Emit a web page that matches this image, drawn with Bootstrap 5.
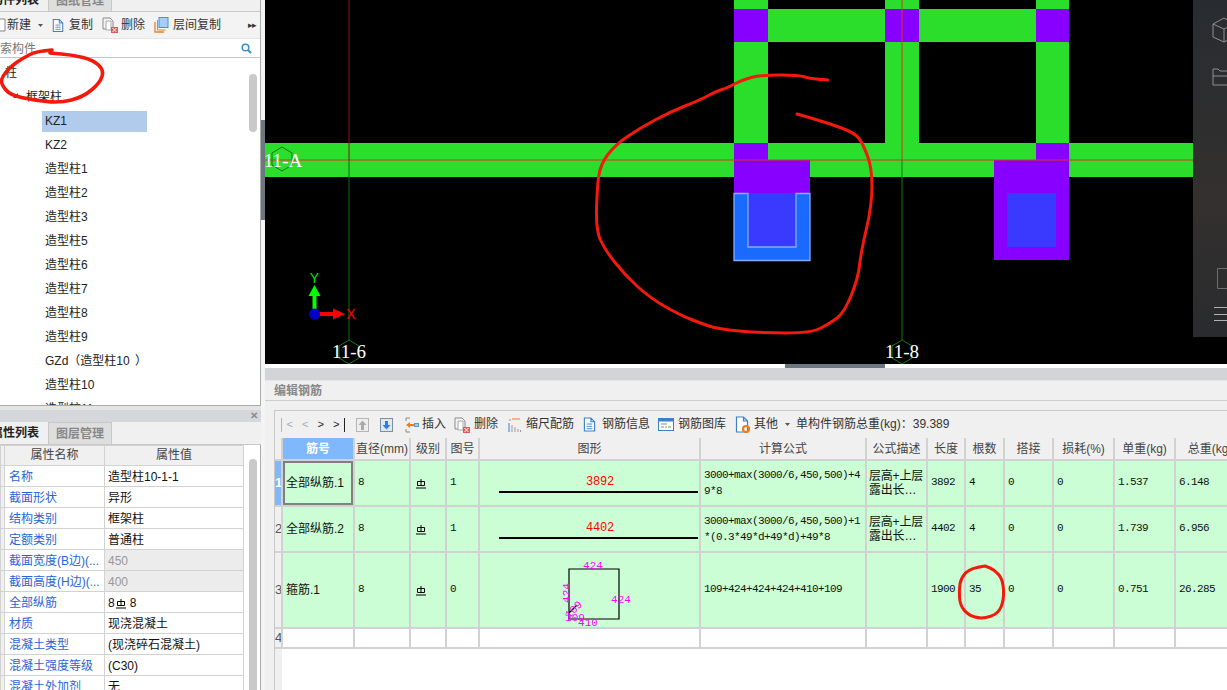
<!DOCTYPE html>
<html lang="zh">
<head>
  <meta charset="UTF-8" />
  <title>编辑钢筋</title>
  <link href="https://cdn.jsdelivr.net/npm/bootstrap@5.3.0/dist/css/bootstrap.min.css" rel="stylesheet" />
  <style>
    html, body { height: 690px; overflow: hidden; }
    body { font: 12px/1.2 "Liberation Sans", "Noto Sans CJK SC", sans-serif; color: #222; background: #fff; }
    .app-shell { width: 1227px; height: 690px; }

    /* spacing helpers for the toolbars */
    .gap-l1 { margin-left: 1px; }
    .gap-l3 { margin-left: 3px; }
    .gap-l4 { margin-left: 4px; }
    .gap-l5 { margin-left: 5px; }
    .gap-l6 { margin-left: 6px; }
    .gap-l7 { margin-left: 7px; }
    .gap-l8 { margin-left: 8px; }
    .gap-l9 { margin-left: 9px; }
    .gap-l10 { margin-left: 10px; }
    .gap-l11 { margin-left: 11px; }
    .gap-l12 { margin-left: 12px; }

    /* left column */
    .side-col { width: 261px; height: 690px; flex: none; background: #e4e4e4; overflow: hidden; }
    .side-top { height: 406px; background: #fff; border-right: 1px solid #aaa; border-bottom: 1px solid #aaa; flex: none; overflow: hidden; position: relative; }
    .tab-strip { background: #f0f0f0; border-bottom: 1px solid #c8c8c8; flex: none; overflow: hidden; }
    .tab-strip.first-strip { height: 12px; }
    .tab-strip.second-strip { height: 23px; }
    .side-tab { width: 64px; font-size: 12px; text-align: center; flex: none; font-weight: 700; color: #222; }
    .side-tab.off { background: #dedede; color: #888; border: 1px solid #c8c8c8; border-bottom: 0; margin-left: 1px; }
    .first-strip .side-tab { line-height: 12px; margin-top: -6px; height: 19px; }
    .first-strip .side-tab:first-child { margin-left: -17px; }
    .second-strip .side-tab { height: 23px; line-height: 22px; }
    .second-strip .side-tab:first-child { margin-left: -17px; }
    .side-tools { height: 27px; background: #f3f3f3; border-bottom: 1px solid #e4e4e4; font-size: 12px; color: #333; flex: none; }
    .side-tools svg { flex: none; }
    .more-mark { font-size: 9px; letter-spacing: -1px; }
    .search-row { height: 19px; line-height: 18px; border-bottom: 1px solid #c6c6c6; color: #777; flex: none; overflow: hidden; padding: 1px 8px 0 0; }
    .search-row span { margin-left: -12px; }
    .tree-row { height: 24px; line-height: 24px; font-size: 12px; color: #222; }
    .tree-wrap { padding-top: 3px; }
    .tree-pick { width: 105px; margin: 1.5px 0 1.5px 42px; height: 21px; line-height: 21px; padding-left: 3px; background: #b0cbec; }
    .lvl-0 { padding-left: 5px; }
    .lvl-1 { padding-left: 26px; }
    .lvl-3 { padding-left: 45px; }
    .paren-wide { letter-spacing: 2px; }
    .slim-thumb { position: absolute; right: 3px; width: 8px; background: #c9c9c9; border-radius: 4px; }
    .thumb-tree { top: 74px; height: 58px; }
    .thumb-prop { top: 14px; height: 240px; }
    .tree-arrow { position: absolute; left: 12px; top: 92px; }
    .close-bar { height: 12px; margin-top: 4px; background: #d6d7db; flex: none; text-align: right; padding-right: 3px; color: #8a8a8a; font-size: 10px; line-height: 12px; font-weight: 700; }
    .prop-zone { flex: 1; background: #fff; border-right: 1px solid #aaa; position: relative; overflow: hidden; }
    .prop-grid { width: 243px; table-layout: fixed; border-collapse: collapse; }
    .prop-grid col:nth-child(1) { width: 4px; }
    .prop-grid col:nth-child(2) { width: 100px; }
    .prop-grid col:nth-child(3) { width: 139px; }
    .prop-grid th, .prop-grid td { border: 1px solid #d2d2d2; height: 21px; padding: 2px 3px 0; font-size: 12px; font-weight: 400; overflow: hidden; white-space: nowrap; color: #111; }
    .prop-grid th { background: #f0f0f0; text-align: center; color: #444; height: 20px; padding-top: 0; }
    .prop-grid td.nm { color: #2b63d8; padding-left: 4px; }
    .prop-grid td.gutter, .prop-grid th.gutter { background: #f0f0f0; padding: 0; }
    .prop-grid td.dim { background: #ececec; color: #999; }

    /* splitter */
    .split-gap { width: 4px; flex: none; background: #f4f4f4; padding-top: 120px; }
    .split-handle { height: 100px; background: #6b7680; }

    /* canvas */
    .main-col { width: 962px; flex: none; }
    .cad-view { display: block; width: 962px; height: 364px; background: #000; flex: none; }
    .cad-label { font: 19px "Liberation Serif", serif; fill: #fff; text-anchor: middle; }
    .axis-mark { font: 14px "Liberation Sans", sans-serif; text-anchor: middle; }
    .hsplit { height: 4px; background: #fff; flex: none; }
    .hsplit div { margin-left: 520px; width: 100px; height: 4px; background: #6b7680; }
    .gray-band { height: 12px; background: #d3d4d8; flex: none; }
    .panel-head { height: 21px; line-height: 21px; padding-left: 9px; background: #f0f0f0; color: #888; font-weight: 700; border-top: 1px solid #e6e6e6; border-bottom: 1px solid #cfcfcf; flex: none; }
    .edit-zone { flex: 1; background: #f0f0f0; padding: 9px 0 0 9px; overflow: hidden; }
    .grid-box { height: 100%; border-top: 1px solid #c8c8c8; border-left: 1px solid #c8c8c8; overflow: hidden; background: #fff; }
    .grid-tools { height: 27px; background: #f0f0f0; color: #333; font-size: 12px; white-space: nowrap; }
    .grid-tools svg { flex: none; }
    .grid-tools .arrow-txt { width: 15.5px; text-align: center; font: 11px "Liberation Mono", monospace; color: #222; }
    .grid-tools .arrow-txt.off { color: #aaa; }

    .rebar-grid { width: 970px; table-layout: fixed; margin: 0; --bs-table-border-color: #d2d2d2; }
    .rebar-grid col:nth-child(1) { width: 7px; }
    .rebar-grid col:nth-child(2) { width: 72px; }
    .rebar-grid col:nth-child(3) { width: 56px; }
    .rebar-grid col:nth-child(4) { width: 36px; }
    .rebar-grid col:nth-child(5) { width: 33px; }
    .rebar-grid col:nth-child(6) { width: 221px; }
    .rebar-grid col:nth-child(7) { width: 166px; }
    .rebar-grid col:nth-child(8) { width: 61px; }
    .rebar-grid col:nth-child(9) { width: 38px; }
    .rebar-grid col:nth-child(10) { width: 39px; }
    .rebar-grid col:nth-child(11) { width: 49px; }
    .rebar-grid col:nth-child(12) { width: 61px; }
    .rebar-grid col:nth-child(13) { width: 61px; }
    .rebar-grid col:nth-child(14) { width: 70px; }
    .rebar-grid > :not(caption) > * > * { padding: 0 3px; border-width: 0 2px 2px 0; border-style: solid; vertical-align: middle; font-size: 12px; line-height: 14px; color: #111; overflow: hidden; }
    .rebar-grid thead th { height: 22px; --bs-table-bg: #f0f0f0; font-weight: 400; text-align: center; color: #444; white-space: nowrap; padding: 0; }
    .rebar-grid thead th.on { --bs-table-bg: #7fb8fb; color: #fff; font-weight: 700; }
    .rebar-grid .filled > * { --bs-table-bg: #cbfed5; }
    .rebar-grid .num-cell { --bs-table-bg: #f0f0f0; padding: 0; text-align: right; color: #555; font-size: 13px; }
    .rebar-grid .num-cell.on { --bs-table-bg: #7fb8fb; color: #fff; font-weight: 700; }
    .rebar-grid .focus-cell { box-shadow: inset 0 0 0 2px #808080; }
    .rebar-grid .mono { font: 11px/14px "Liberation Mono", monospace; letter-spacing: -.6px; white-space: nowrap; padding: 0 3px 2px; }
    .rebar-grid .formula-cell { line-height: 16px; padding-bottom: 1px; }
    .rebar-grid .desc-cell { padding: 0 0 0 2px; white-space: nowrap; letter-spacing: -.2px; }
    .rebar-grid .grade-cell { padding-left: 5px; }
    .row-a { height: 46px; }
    .row-c { height: 76px; }
    .row-d { height: 20px; }
    .bar-num { font: 12px/14px "Liberation Mono", monospace; color: #f00; text-align: center; margin: 2px 0 0 21px; letter-spacing: -.2px; }
    .bar-line { height: 2px; background: #000; margin: 2px 0 0 16px; width: 199px; }
    .grid-foot { width: 7px; height: 60px; background: #f0f0f0; }
    .ink-layer { position: absolute; left: 0; top: 0; pointer-events: none; }
    .ink-layer path { fill: none; stroke: #f5180c; stroke-width: 3; stroke-linejoin: round; stroke-linecap: round; }
    .ink-layer path.ink-thick { stroke-width: 3.6; }
  </style>
</head>
<body class="position-relative">
  <svg width="0" height="0" class="position-absolute">
    <symbol id="ic-doc" viewBox="0 0 14 16">
      <path d="M1.500 1h7l4 4v10h-11z M8.500 1v4h4" fill="#fff" stroke="#3f7fc4" stroke-width="1.200" />
      <path d="M4 7.500h6M4 10h6M4 12.500h6" stroke="#3f7fc4" />
    </symbol>
    <symbol id="ic-del" viewBox="0 0 16 16">
      <path d="M1 1h7l3 3v8H1z" fill="#f4f4f4" stroke="#8a8a8a" />
      <path d="M4 4h5v9H4z" fill="#fff" stroke="#a8a8a8" />
      <rect x="9" y="10" width="7" height="6" fill="#dd5a5a" />
      <path d="M10.500 11l4 4M14.500 11l-4 4" stroke="#fff" />
    </symbol>
    <symbol id="ic-other" viewBox="0 0 16 18">
      <path d="M1.500 1h7l4 4v11h-11z M8.500 1v4h4" fill="#fff" stroke="#3f7fc4" stroke-width="1.200" />
      <circle cx="11" cy="13" r="3" fill="none" stroke="#f07a1e" stroke-width="2.200" />
    </symbol>
    <symbol id="ic-grade" viewBox="0 0 10 11">
      <path d="M1.500 3.500h7v4h-7zM5 1v7M0 10h10" fill="none" stroke="#000" />
    </symbol>
  </svg>

  <div class="app-shell d-flex">
    <div class="side-col d-flex flex-column">
      <div class="side-top d-flex flex-column">
        <div class="tab-strip first-strip d-flex">
          <div class="side-tab">构件列表</div>
          <div class="side-tab off">图纸管理</div>
        </div>
        <div class="side-tools d-flex align-items-center">
          <svg width="6" height="14" viewBox="0 0 6 14"><path d="M0 1h5v12H0" fill="#fff" stroke="#888" /></svg>
          <span class="gap-l1">新建</span>
          <svg class="gap-l7" width="5" height="3" viewBox="0 0 5 3"><path d="M0 0h5L2.500 3z" fill="#555" /></svg>
          <svg class="gap-l9" width="12" height="15"><use href="#ic-doc" /></svg>
          <span class="gap-l5">复制</span>
          <svg class="gap-l9" width="16" height="16"><use href="#ic-del" /></svg>
          <span class="gap-l3">删除</span>
          <svg class="gap-l9" width="15" height="16" viewBox="0 0 15 16"><path d="M1 5v10h9" fill="none" stroke="#e8832a" stroke-width="1.300" /><path d="M3.500 3v10h8" fill="none" stroke="#e8832a" /><rect x="5" y=".5" width="9" height="10" fill="#a9cdf3" stroke="#4d8fd6" /></svg>
          <span class="gap-l4">层间复制</span>
          <span class="ms-auto me-1 more-mark">▸▸</span>
        </div>
        <div class="search-row d-flex align-items-center justify-content-between">
          <span>搜索构件...</span>
          <svg width="11" height="11" viewBox="0 0 11 11"><circle cx="4.500" cy="4.500" r="3.300" fill="none" stroke="#3a8fc8" stroke-width="1.500" /><path d="M7 7l3 3" stroke="#3a8fc8" stroke-width="2" /></svg>
        </div>
        <div class="tree-wrap">
          <div class="tree-row lvl-0">柱</div>
          <div class="tree-row lvl-1">框架柱</div>
          <div class="tree-pick">KZ1</div>
          <div class="tree-row lvl-3">KZ2</div>
          <div class="tree-row lvl-3">造型柱1</div>
          <div class="tree-row lvl-3">造型柱2</div>
          <div class="tree-row lvl-3">造型柱3</div>
          <div class="tree-row lvl-3">造型柱5</div>
          <div class="tree-row lvl-3">造型柱6</div>
          <div class="tree-row lvl-3">造型柱7</div>
          <div class="tree-row lvl-3">造型柱8</div>
          <div class="tree-row lvl-3">造型柱9</div>
          <div class="tree-row lvl-3">GZd（造型柱10<span class="paren-wide"> </span>）</div>
          <div class="tree-row lvl-3">造型柱10</div>
          <div class="tree-row lvl-3">造型柱11</div>
        </div>
        <div class="slim-thumb thumb-tree"></div>
        <svg class="tree-arrow" width="7" height="7" viewBox="0 0 7 7"><path d="M6 1v5H1z" fill="#444" /></svg>
      </div>
      <div class="close-bar">✕</div>
      <div class="tab-strip second-strip d-flex">
        <div class="side-tab">属性列表</div>
        <div class="side-tab off">图层管理</div>
      </div>
      <div class="prop-zone">
        <table class="prop-grid">
          <colgroup><col /><col /><col /></colgroup>
          <tr><th class="gutter"></th><th>属性名称</th><th>属性值</th></tr>
          <tr><td class="gutter"></td><td class="nm">名称</td><td>造型柱10-1-1</td></tr>
          <tr><td class="gutter"></td><td class="nm">截面形状</td><td>异形</td></tr>
          <tr><td class="gutter"></td><td class="nm">结构类别</td><td>框架柱</td></tr>
          <tr><td class="gutter"></td><td class="nm">定额类别</td><td>普通柱</td></tr>
          <tr><td class="gutter"></td><td class="nm">截面宽度(B边)(...</td><td class="dim">450</td></tr>
          <tr><td class="gutter"></td><td class="nm">截面高度(H边)(...</td><td class="dim">400</td></tr>
          <tr><td class="gutter"></td><td class="nm">全部纵筋</td><td>8<svg class="gap-l1 me-1" width="10" height="11"><use href="#ic-grade" /></svg>8</td></tr>
          <tr><td class="gutter"></td><td class="nm">材质</td><td>现浇混凝土</td></tr>
          <tr><td class="gutter"></td><td class="nm">混凝土类型</td><td>(现浇碎石混凝土)</td></tr>
          <tr><td class="gutter"></td><td class="nm">混凝土强度等级</td><td>(C30)</td></tr>
          <tr><td class="gutter"></td><td class="nm">混凝土外加剂</td><td>无</td></tr>
        </table>
        <div class="slim-thumb thumb-prop"></div>
      </div>
    </div>

    <div class="split-gap"><div class="split-handle"></div></div>

    <div class="main-col d-flex flex-column">
      <svg class="cad-view" viewBox="265 0 962 364" xmlns="http://www.w3.org/2000/svg">
        <g fill="#2bde2c">
          <rect x="734" y="0" width="34" height="143" />
          <rect x="885" y="0" width="34" height="143" />
          <rect x="1036" y="0" width="33" height="143" />
          <rect x="734" y="9" width="335" height="33" />
          <rect x="265" y="143" width="928" height="34" />
        </g>
        <g fill="#8800ff">
          <rect x="734" y="9" width="34" height="33" />
          <rect x="885" y="9" width="34" height="33" />
          <rect x="1036" y="9" width="33" height="33" />
          <rect x="734" y="143" width="34" height="17" />
          <rect x="1036" y="143" width="33" height="17" />
          <rect x="734" y="160" width="76" height="34" />
          <rect x="994" y="160" width="75" height="100" />
        </g>
        <rect x="1007" y="193" width="49" height="54" fill="#3a3aff" />
        <rect x="748" y="193" width="48" height="54" fill="#3a3aff" />
        <path d="M734 193.500h14v53.500h48v-53.500h14v67h-76z" fill="#1a6aff" stroke="#86adff" stroke-width="1.300" />
        <path d="M265 160H1193" stroke="#e0331c" stroke-width="1" />
        <path d="M349 0V160" stroke="#8c1010" />
        <path d="M349 160V340" stroke="#0f6a10" />
        <path d="M902 0V160" stroke="#e0331c" />
        <path d="M902 160V340" stroke="#0f7a10" />
        <path d="M282 147l10 6v12l-10 6-10-6v-12z" fill="none" stroke="#137a13" />
        <path d="M349 340l10 6v12l-10 6-10-6v-12z M902 340l10 6v12l-10 6-10-6v-12z" fill="none" stroke="#137a13" />
        <text class="cad-label" x="283" y="167">11-A</text>
        <text class="cad-label" x="349" y="358">11-6</text>
        <text class="cad-label" x="902" y="358">11-8</text>
        <path d="M314.500 310V295" stroke="#00ff00" stroke-width="4" />
        <path d="M314.500 285l6 11h-12z" fill="#00ff00" />
        <path d="M319 314H334" stroke="#ff0000" stroke-width="4" />
        <path d="M345 314l-12-5.500v11z" fill="#ff0000" />
        <circle cx="314.500" cy="314" r="5.500" fill="#0000c8" />
        <text class="axis-mark" x="314.500" y="283" fill="#00e000">Y</text>
        <text class="axis-mark" x="351" y="319" fill="#ff0000">X</text>
        <defs><linearGradient id="dock-fill" x1="0" y1="0" x2="0" y2="1"><stop offset="0" stop-color="#282c31" /><stop offset=".6" stop-color="#33302e" /><stop offset="1" stop-color="#2a2b2e" /></linearGradient></defs>
        <rect x="1193" y="0" width="34" height="337" fill="url(#dock-fill)" />
        <g fill="none" stroke="#8e8e8e" stroke-width="1">
          <path d="M1213 24l11-6 10 6v13l-10 5-11-5zM1213 24l11 5 10-5M1224 29v13" />
          <path d="M1213 85V69h5l2 2h12M1213 76h19M1213 85h19" />
        </g>
        <path d="M1217.500 268.500h14v20h-14z" fill="none" stroke="#6e6e6e" />
        <path d="M1214 307.500h13M1214 314.500h13M1214 320.500h13" stroke="#b0b0b0" />
      </svg>
      <div class="hsplit"><div></div></div>
      <div class="gray-band"></div>
      <div class="panel-head">编辑钢筋</div>
      <div class="edit-zone">
        <div class="grid-box">
          <div class="grid-tools d-flex align-items-center">
            <svg class="gap-l6" width="1" height="14"><rect width="1" height="14" fill="#c9a9b8" /></svg>
            <span class="arrow-txt off">&lt;</span><span class="arrow-txt off">&lt;</span><span class="arrow-txt">&gt;</span><span class="arrow-txt">&gt;</span>
            <svg width="1" height="14"><rect width="1" height="14" fill="#222" /></svg>
            <svg class="gap-l11" width="13" height="14" viewBox="0 0 13 14"><rect x=".5" y=".5" width="12" height="13" fill="#eee" stroke="#b5b5b5" /><path d="M6.500 2.500l4 4.500H8v5H5V7H2.500z" fill="#aaa" /></svg>
            <svg class="gap-l11" width="13" height="14" viewBox="0 0 13 14"><rect x=".5" y=".5" width="12" height="13" fill="#dfe7ef" stroke="#7e8f9e" /><path d="M6.500 11.500l-4-4.500H5V3h3v4h2.500z" fill="#2f80dd" /></svg>
            <svg class="gap-l12" width="14" height="16" viewBox="0 0 14 16"><path d="M1 1h4M1 1v3M1 15h4M1 15v-3" stroke="#8a8a8a" fill="none" /><path d="M1 8l4-3v2h4v2H5v2z" fill="#ee7d20" /><rect x="9.500" y="6.500" width="4" height="3" fill="#9ecdf0" stroke="#5a9ad4" /></svg>
            <span class="gap-l3">插入</span>
            <svg class="gap-l8" width="16" height="16"><use href="#ic-del" /></svg>
            <span class="gap-l4">删除</span>
            <svg class="gap-l10" width="13" height="16" viewBox="0 0 13 16"><path d="M1 3h2M4 2h8" stroke="#ee7d20" /><path d="M1 6v9" stroke="#3f7fc4" /><path d="M4 8v7M7 10v5M10 12v3M12.500 13v2" stroke="#999" /></svg>
            <span class="gap-l5">缩尺配筋</span>
            <svg class="gap-l9" width="13" height="15"><use href="#ic-doc" /></svg>
            <span class="gap-l6">钢筋信息</span>
            <svg class="gap-l8" width="16" height="13" viewBox="0 0 16 13"><rect x=".5" y=".5" width="15" height="12" fill="#fff" stroke="#3f7fc4" /><rect x="1" y="1" width="14" height="2.500" fill="#3f7fc4" /><path d="M3 6h6M3 9h3" stroke="#888" /><path d="M7 9h2" stroke="#ee7d20" /><path d="M10 9h3" stroke="#45b045" /></svg>
            <span class="gap-l4">钢筋图库</span>
            <svg class="gap-l9" width="16" height="18"><use href="#ic-other" /></svg>
            <span class="gap-l3">其他</span>
            <svg class="gap-l7" width="5" height="3" viewBox="0 0 5 3"><path d="M0 0h5L2.500 3z" fill="#555" /></svg>
            <span class="gap-l6">单构件钢筋总重(kg)：39.389</span>
          </div>
          <table class="table rebar-grid">
            <colgroup>
              <col /><col /><col /><col /><col /><col /><col /><col /><col /><col /><col /><col /><col /><col />
            </colgroup>
            <thead>
              <tr><th></th><th class="on">筋号</th><th>直径(mm)</th><th>级别</th><th>图号</th><th>图形</th><th>计算公式</th><th>公式描述</th><th>长度</th><th>根数</th><th>搭接</th><th>损耗(%)</th><th>单重(kg)</th><th>总重(kg)</th></tr>
            </thead>
            <tbody>
              <tr class="filled row-a">
                <td class="num-cell on">1</td><td class="focus-cell">全部纵筋.1</td><td class="mono">8</td>
                <td class="grade-cell"><svg width="10" height="11"><use href="#ic-grade" /></svg></td>
                <td class="mono">1</td>
                <td><div class="bar-num">3892</div><div class="bar-line"></div></td>
                <td class="mono formula-cell">3000+max(3000/6,450,500)+4<br />9*8</td>
                <td class="desc-cell">层高+上层<br />露出长…</td>
                <td class="mono">3892</td><td class="mono">4</td><td class="mono">0</td><td class="mono">0</td><td class="mono">1.537</td><td class="mono">6.148</td>
              </tr>
              <tr class="filled row-a">
                <td class="num-cell">2</td><td>全部纵筋.2</td><td class="mono">8</td>
                <td class="grade-cell"><svg width="10" height="11"><use href="#ic-grade" /></svg></td>
                <td class="mono">1</td>
                <td><div class="bar-num">4402</div><div class="bar-line"></div></td>
                <td class="mono formula-cell">3000+max(3000/6,450,500)+1<br />*(0.3*49*d+49*d)+49*8</td>
                <td class="desc-cell">层高+上层<br />露出长…</td>
                <td class="mono">4402</td><td class="mono">4</td><td class="mono">0</td><td class="mono">0</td><td class="mono">1.739</td><td class="mono">6.956</td>
              </tr>
              <tr class="filled row-c">
                <td class="num-cell">3</td><td>箍筋.1</td><td class="mono">8</td>
                <td class="grade-cell"><svg width="10" height="11"><use href="#ic-grade" /></svg></td>
                <td class="mono">0</td>
                <td class="p-0">
                  <svg class="d-block" width="219" height="74" viewBox="479 552 219 74" font-family="Liberation Mono" font-size="11" fill="#f0f">
                    <path d="M568 568H618V618H568zM568 612l8-8" fill="none" stroke="#000" stroke-width="1.200" />
                    <text x="592" y="568" text-anchor="middle">424</text>
                    <text x="620" y="602" text-anchor="middle">424</text>
                    <text text-anchor="middle" transform="translate(569 592) rotate(-90)">424</text>
                    <text x="587" y="625" text-anchor="middle">410</text>
                    <text x="574" y="620" text-anchor="middle">109</text>
                    <text text-anchor="middle" transform="translate(575 611) rotate(-45)">109</text>
                  </svg>
                </td>
                <td class="mono">109+424+424+424+410+109</td>
                <td></td>
                <td class="mono">1900</td><td class="mono">35</td><td class="mono">0</td><td class="mono">0</td><td class="mono">0.751</td><td class="mono">26.285</td>
              </tr>
              <tr class="row-d">
                <td class="num-cell">4</td><td></td><td></td><td></td><td></td><td></td><td></td><td></td><td></td><td></td><td></td><td></td><td></td><td></td>
              </tr>
            </tbody>
          </table>
          <div class="grid-foot"></div>
        </div>
      </div>
    </div>
  </div>

  <svg class="ink-layer" width="1227" height="690" viewBox="0 0 1227 690">
    <path class="ink-thick" data-pts="52,50 37,51 23,58 10,67 2,77 1,84 10,95 33,100 60,103 83,97 100,83 104,70 93,60 73,55 50,53" />
    <path data-pts="828,80 811,79 799,75 760,75 742,80 727,88 717,91 700,100 670,112 640,128 615,145 600,165 597,190 596,230 605,250 625,275 650,298 680,315 700,323 718,329 760,333 811,333 829,324 844,313 858,279 861,252 872,205 872,168 863,144 855,133 828,123 797,114" />
    <path data-pts="985,566 970,568 961,578 959,590 960,605 968,615 982,619 998,614 1004,600 1003,580 995,570 985,566" />
  </svg>

  <script>
    // smooth the hand drawn marks: quadratic curves through segment midpoints
    document.querySelectorAll(".ink-layer path").forEach((mark) => {
      const pts = mark.dataset.pts.split(" ").map((p) => p.split(",").map(Number));
      let d = "M" + pts[0].join(" ");
      for (let i = 1; i < pts.length - 1; i++) {
        const midX = (pts[i][0] + pts[i + 1][0]) / 2;
        const midY = (pts[i][1] + pts[i + 1][1]) / 2;
        d += " Q" + pts[i].join(" ") + " " + midX + " " + midY;
      }
      d += " L" + pts[pts.length - 1].join(" ");
      mark.setAttribute("d", d);
    });
  </script>
</body>
</html>
